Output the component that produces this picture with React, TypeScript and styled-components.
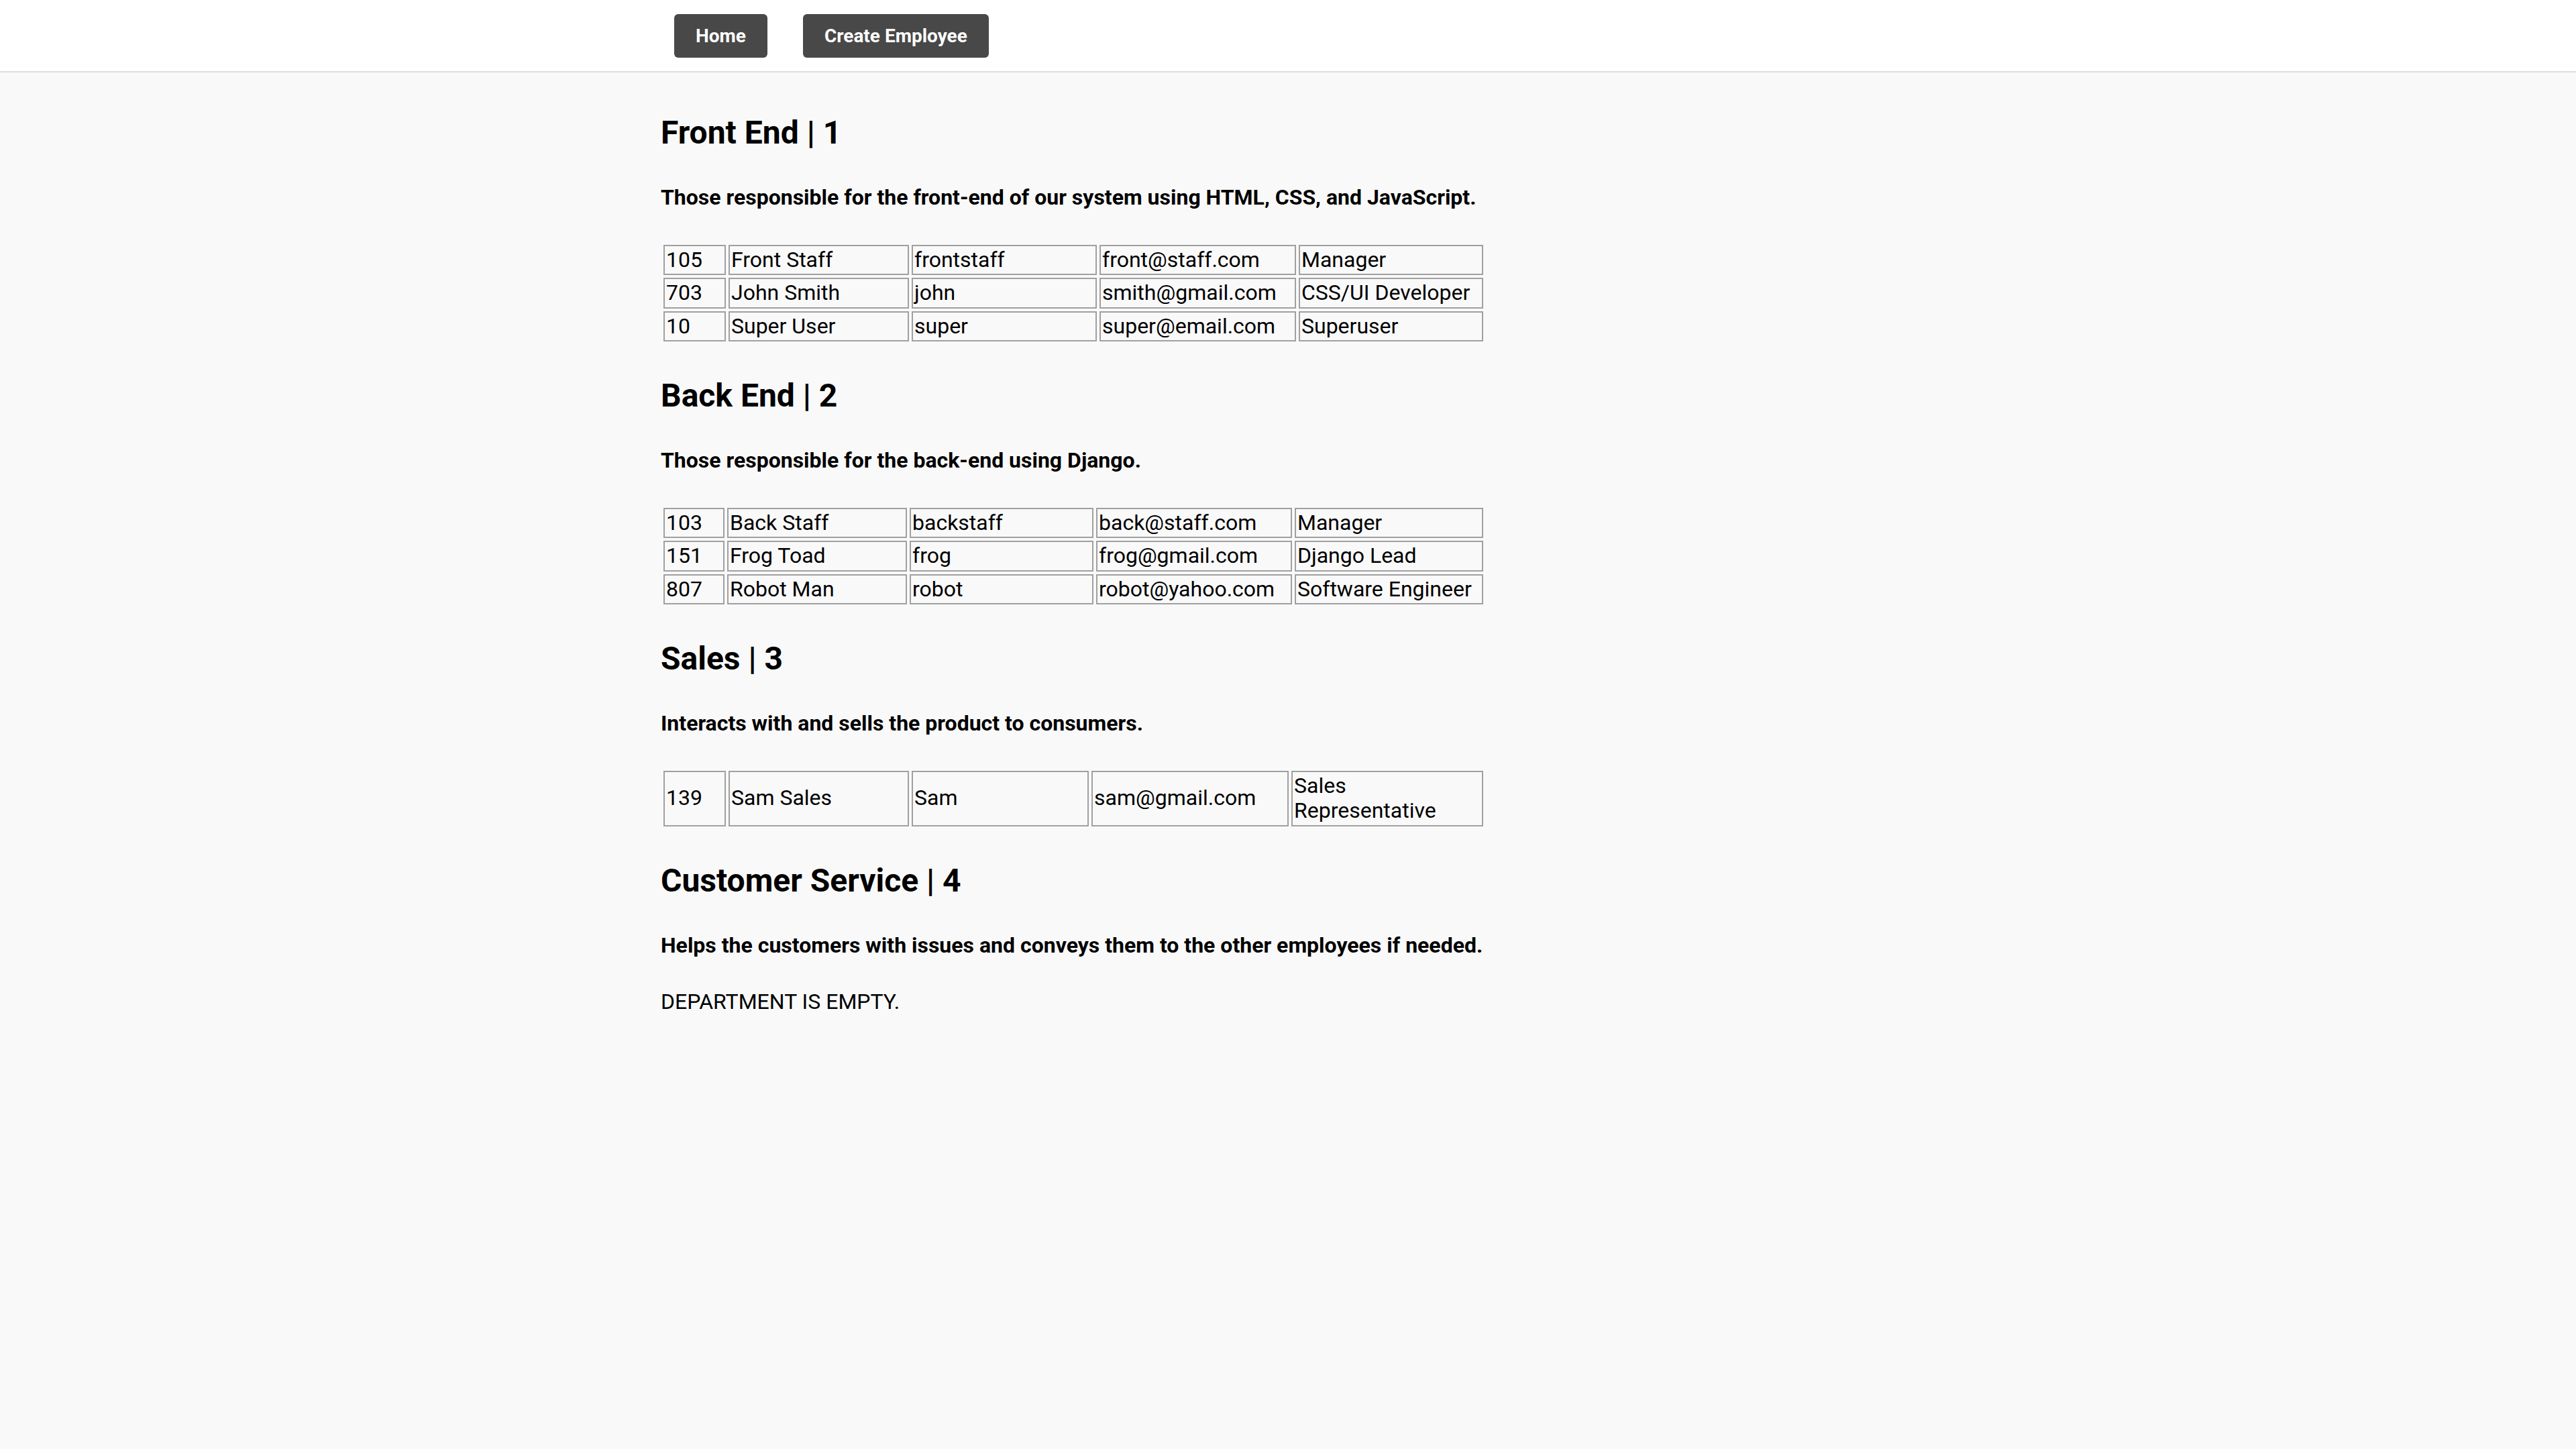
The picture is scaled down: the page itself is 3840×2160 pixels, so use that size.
import styled, { createGlobalStyle } from "styled-components";

const GlobalStyle = createGlobalStyle`
  html, body {
    margin: 0;
    padding: 0;
    background: #f9f9f9;
    font-family: Roboto, "Liberation Sans", Arial, sans-serif;
    color: #000;
  }
`;

type Employee = {
  id: number;
  name: string;
  username: string;
  email: string;
  role: string;
};

type Department = {
  id: number;
  name: string;
  description: string;
  cols: number[];
  employees: Employee[];
};

const departments: Department[] = [
  {
    id: 1,
    name: "Front End",
    description:
      "Those responsible for the front-end of our system using HTML, CSS, and JavaScript.",
    cols: [93, 269, 276, 293, 275],
    employees: [
      { id: 105, name: "Front Staff", username: "frontstaff", email: "front@staff.com", role: "Manager" },
      { id: 703, name: "John Smith", username: "john", email: "smith@gmail.com", role: "CSS/UI Developer" },
      { id: 10, name: "Super User", username: "super", email: "super@email.com", role: "Superuser" },
    ],
  },
  {
    id: 2,
    name: "Back End",
    description: "Those responsible for the back-end using Django.",
    cols: [91, 268, 274, 292, 281],
    employees: [
      { id: 103, name: "Back Staff", username: "backstaff", email: "back@staff.com", role: "Manager" },
      { id: 151, name: "Frog Toad", username: "frog", email: "frog@gmail.com", role: "Django Lead" },
      { id: 807, name: "Robot Man", username: "robot", email: "robot@yahoo.com", role: "Software Engineer" },
    ],
  },
  {
    id: 3,
    name: "Sales",
    description: "Interacts with and sells the product to consumers.",
    cols: [93, 269, 264, 294, 286],
    employees: [
      { id: 139, name: "Sam Sales", username: "Sam", email: "sam@gmail.com", role: "Sales Representative" },
    ],
  },
  {
    id: 4,
    name: "Customer Service",
    description:
      "Helps the customers with issues and conveys them to the other employees if needed.",
    cols: [],
    employees: [],
  },
];

const NavBar = styled.nav`
  background: #fff;
  border-bottom: 2px solid #dedede;
  padding: 21px 0 20px;
`;

const Wrapper = styled.div`
  max-width: 1870px;
  margin: 0 auto;
`;

const NavLinks = styled.div`
  display: flex;
  gap: 53px;
  padding-left: 20px;
`;

const NavButton = styled.a`
  display: inline-block;
  background: #484848;
  color: #fff;
  font-size: 28px;
  font-weight: 700;
  line-height: 33px;
  padding: 16px 32px;
  border-radius: 6px;
  text-decoration: none;
  cursor: pointer;
`;

const Main = styled.main`
  padding-top: 62px;
`;

const Content = styled.div`
  width: 1229px;
`;

const Section = styled.section`
  margin-bottom: 49px;
`;

const Title = styled.h2`
  font-size: 48px;
  font-weight: 700;
  line-height: 56px;
  margin: 0 0 50px;
`;

const Description = styled.h4`
  font-size: 32px;
  font-weight: 700;
  line-height: 37.5px;
  margin: 0 0 47px;
`;

const Table = styled.table`
  width: 100%;
  table-layout: fixed;
  border-collapse: separate;
  border-spacing: 4px;
  font-size: 32px;
`;

const Cell = styled.td`
  border: 2px solid #a0a0a0;
  padding: 2px;
  line-height: 37.5px;
  text-align: left;
  vertical-align: middle;
  overflow: hidden;
`;

const Empty = styled.p`
  font-size: 32px;
  line-height: 37.5px;
  margin: 0;
`;

const DepartmentBlock = ({ dept }: { dept: Department }) => (
  <Section>
    <Title>
      {dept.name} | {dept.id}
    </Title>
    <Description>{dept.description}</Description>
    {dept.employees.length > 0 ? (
      <Table>
        <colgroup>
          {dept.cols.map((w, i) => (
            <col key={i} style={{ width: w }} />
          ))}
        </colgroup>
        <tbody>
          {dept.employees.map((e) => (
            <tr key={e.id}>
              <Cell>{e.id}</Cell>
              <Cell>{e.name}</Cell>
              <Cell>{e.username}</Cell>
              <Cell>{e.email}</Cell>
              <Cell>{e.role}</Cell>
            </tr>
          ))}
        </tbody>
      </Table>
    ) : (
      <Empty>DEPARTMENT IS EMPTY.</Empty>
    )}
  </Section>
);

export default function App() {
  return (
    <>
      <GlobalStyle />
      <NavBar>
        <Wrapper>
          <NavLinks>
            <NavButton>Home</NavButton>
            <NavButton>Create Employee</NavButton>
          </NavLinks>
        </Wrapper>
      </NavBar>
      <Main>
        <Wrapper>
          <Content>
            {departments.map((d) => (
              <DepartmentBlock key={d.id} dept={d} />
            ))}
          </Content>
        </Wrapper>
      </Main>
    </>
  );
}
